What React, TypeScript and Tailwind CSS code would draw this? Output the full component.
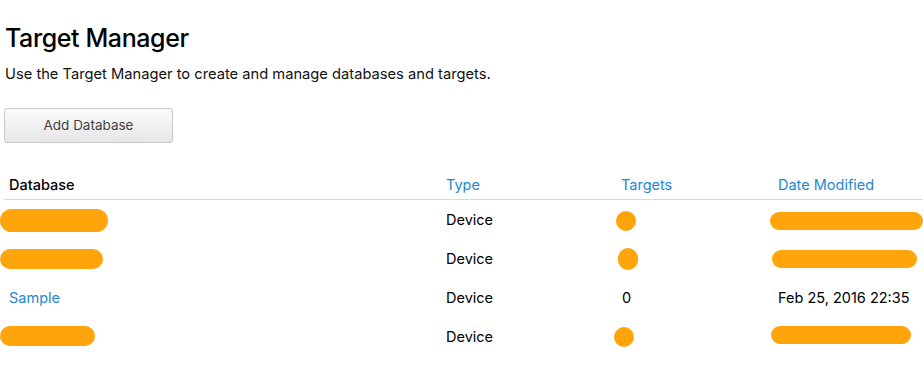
const font = { fontFamily: 'Inter, "Liberation Sans", sans-serif' };

type Row = {
  name: string | null;
  nameBlob?: string;
  targets: string | null;
  targetBlob?: string;
  date: string | null;
  dateBlob?: string;
};

const rows: Row[] = [
  { name: null, nameBlob: 'w-[108px] h-[23px] -ml-[9px] mt-[1px]', targets: null, targetBlob: 'w-[20px] h-[20px] ml-[-6px] mt-[3px]', date: null, dateBlob: 'w-[153px] h-[18px] -ml-[8px] mt-[3px]' },
  { name: null, nameBlob: 'w-[103px] h-[20px] -ml-[9px]', targets: null, targetBlob: 'w-[20px] h-[22px] ml-[-4px] mt-[1px]', date: null, dateBlob: 'w-[145px] h-[18px] -ml-[6px]' },
  { name: 'Sample', targets: '0', date: 'Feb 25, 2016 22:35' },
  { name: null, nameBlob: 'w-[95px] h-[20px] -ml-[9px] mt-[-2px]', targets: null, targetBlob: 'w-[20px] h-[20px] ml-[-8px]', date: null, dateBlob: 'w-[140px] h-[18px] -ml-[7px] mt-[-3px]' },
];

function Blob({ className }: { className: string }) {
  return <div className={`rounded-full bg-[#ffa40b] blur-[0.6px] ${className}`} />;
}

export default function App() {
  return (
    <div className="w-[923px] h-[370px] bg-white overflow-hidden text-black" style={font}>
      <div className="pt-[22px]">
        <h1 className="pl-[5px] text-[25px] leading-[32px] font-medium tracking-[-0.4px]">Target Manager</h1>
        <p className="pl-[5px] mt-[10px] text-[14.7px] leading-[20px] text-[#111]">
          Use the Target Manager to create and manage databases and targets.
        </p>
        <button className="ml-[4px] mt-[24px] w-[169px] h-[35px] rounded-[3px] border border-[#c9c9c9] bg-gradient-to-b from-[#fbfbfb] to-[#e6e6e6] text-[13.5px] text-[#444]">
          Add Database
        </button>

        <div className="ml-[4px] mt-[27px]">
          <div className="grid grid-cols-[437px_176px_156px_1fr] h-[30px] items-center border-b border-[#d9d9d9] text-[14.5px]">
            <div className="pl-[5px] pt-[1px] font-medium">Database</div>
            <div className="pl-[5px] pt-[1px] text-[#1e88d0]">Type</div>
            <div className="pl-[4px] pt-[1px] text-[#1e88d0]">Targets</div>
            <div className="pl-[5px] pt-[1px] text-[#1e88d0]">Date Modified</div>
          </div>
          {rows.map((r, i) => (
            <div key={i} className="grid grid-cols-[437px_176px_156px_1fr] h-[39px] items-center text-[14.5px]">
              <div className="pl-[5px]">
                {r.name ? <span className="text-[#1e88d0]">{r.name}</span> : <Blob className={r.nameBlob!} />}
              </div>
              <div className="pl-[5px]">Device</div>
              <div className="pl-[5px]">
                {r.targets ? <span>{r.targets}</span> : <Blob className={r.targetBlob!} />}
              </div>
              <div className="pl-[5px]">
                {r.date ? <span>{r.date}</span> : <Blob className={r.dateBlob!} />}
              </div>
            </div>
          ))}
        </div>
      </div>
    </div>
  );
}
